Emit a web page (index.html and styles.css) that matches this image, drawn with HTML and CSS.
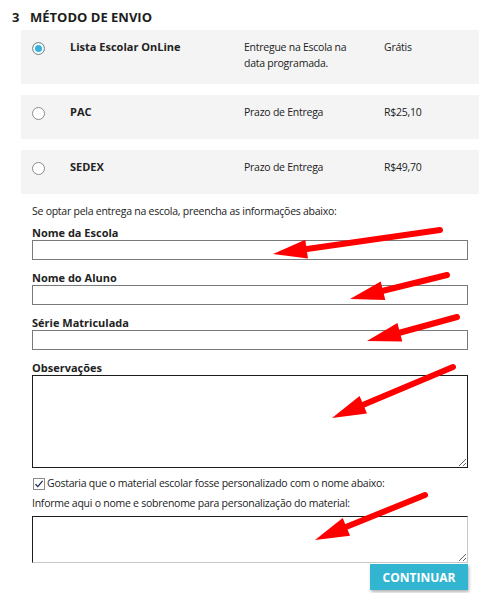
FILE: index.html
```html
<!DOCTYPE html>
<html lang="pt-BR">
<head>
<meta charset="utf-8">
<title>Método de Envio</title>
<link rel="stylesheet" href="styles.css">
</head>
<body>
<div class="page">
  <h2 class="step-title"><span class="step-num">3</span>MÉTODO DE ENVIO</h2>

  <div class="methods">
    <div class="method method-first">
      <span class="radio radio-on"></span>
      <span class="m-name">Lista Escolar OnLine</span>
      <span class="m-desc">Entregue na Escola na data programada.</span>
      <span class="m-price">Grátis</span>
    </div>
    <div class="method">
      <span class="radio"></span>
      <span class="m-name">PAC</span>
      <span class="m-desc">Prazo de Entrega</span>
      <span class="m-price">R$25,10</span>
    </div>
    <div class="method">
      <span class="radio"></span>
      <span class="m-name">SEDEX</span>
      <span class="m-desc">Prazo de Entrega</span>
      <span class="m-price">R$49,70</span>
    </div>
  </div>

  <form class="school-form">
    <p class="intro">Se optar pela entrega na escola, preencha as informações abaixo:</p>
    <div class="field">
      <label class="f-label">Nome da Escola</label>
      <input class="f-input" type="text">
    </div>
    <div class="field">
      <label class="f-label">Nome do Aluno</label>
      <input class="f-input" type="text">
    </div>
    <div class="field">
      <label class="f-label">Série Matriculada</label>
      <input class="f-input" type="text">
    </div>
    <div class="field">
      <label class="f-label">Observações</label>
      <textarea class="f-area"></textarea>
    </div>
    <div class="check-row">
      <span class="checkbox"><svg width="12" height="12" viewBox="0 0 12 12"><rect x="0.5" y="0.5" width="11" height="11" fill="#fff" stroke="#8a8a8a"/><path d="M2.5 6.2 L4.8 8.6 L9.6 2.8" fill="none" stroke="#1d2a4a" stroke-width="1.3"/></svg></span>
      <span class="check-text">Gostaria que o material escolar fosse personalizado com o nome abaixo:</span>
    </div>
    <p class="info">Informe aqui o nome e sobrenome para personalização do material:</p>
    <textarea class="f-area2"></textarea>
    <div class="actions">
      <button type="button" class="btn">CONTINUAR</button>
    </div>
  </form>

  <svg class="annot" width="492" height="593" viewBox="0 0 492 593">
    <g stroke="#ff0000" stroke-width="6" stroke-linecap="round" fill="none">
      <line x1="440" y1="230" x2="300" y2="250"/>
      <line x1="447" y1="275" x2="378" y2="292"/>
      <line x1="457" y1="317" x2="395" y2="334"/>
      <line x1="453" y1="367" x2="358" y2="407"/>
      <line x1="425" y1="495" x2="341" y2="529"/>
    </g>
    <g fill="#ff0000">
      <polygon points="273,254 305.3,239.8 308,258.6"/>
      <polygon points="350,299 380.7,281.6 385.3,300"/>
      <polygon points="367,341 397.4,323 402.3,341.4"/>
      <polygon points="332,418 359.6,396 367,413.6"/>
      <polygon points="315,540 342.7,518.1 350.1,535.7"/>
    </g>
  </svg>
</div>
</body>
</html>
```

FILE: styles.css
```css
* { box-sizing: border-box; }

html, body {
  margin: 0;
  padding: 0;
  background: #fff;
}

body {
  font-family: "Open Sans", "DejaVu Sans", sans-serif;
  font-size: 10.5px;
  letter-spacing: -0.25px;
  color: #222;
}

.page {
  position: relative;
  width: 492px;
  height: 593px;
  padding-top: 9px;
  overflow: hidden;
}

.step-title {
  margin: 0 0 5px 12px;
  font-size: 13px;
  line-height: 16px;
  font-weight: 700;
  letter-spacing: 0;
  color: #1e1e1e;
  display: flex;
}

.step-num {
  width: 18px;
}

.methods {
  margin-left: 21px;
  width: 458px;
  display: flex;
  flex-direction: column;
  gap: 11px;
}

.method {
  background: #f4f4f4;
  min-height: 44px;
  padding: 9px 0 13px 11px;
  display: grid;
  grid-template-columns: 38px 174px 140px 1fr;
  align-items: start;
  line-height: 16px;
}

.radio {
  width: 13px;
  height: 13px;
  margin-top: 3px;
  border: 1px solid #8c8c8c;
  border-radius: 50%;
  background: #fff;
}

.radio-on {
  background: #35b3db;
  box-shadow: inset 0 0 0 2px #fff;
}

.m-name {
  font-size: 11px;
  font-weight: 700;
  letter-spacing: 0;
  color: #222;
}

.m-desc {
  max-width: 108px;
  color: #222;
}

.m-price {
  color: #222;
}

.school-form {
  margin: 0;
  padding: 0 24px 0 32px;
  width: 492px;
}

.intro {
  margin: 10px 0 7px;
  line-height: 15px;
}

.field + .field {
  margin-top: 11px;
}

.f-label {
  display: block;
  font-size: 11px;
  font-weight: 700;
  letter-spacing: 0;
  line-height: 14px;
  color: #222;
}

.f-input {
  display: block;
  width: 436px;
  height: 20px;
  margin: 0;
  border: 1px solid #7a7a7a;
  background: #fff;
  font: inherit;
  padding: 0 4px;
}

.f-area {
  display: block;
  width: 436px;
  height: 93px;
  margin: 0;
  border: 1px solid #1c1c1c;
  background: #fff;
  font: inherit;
}

.check-row {
  margin-top: 8px;
  display: flex;
  align-items: center;
  gap: 2px;
  line-height: 15px;
  padding-left: 1px;
}

.checkbox {
  display: flex;
  width: 12px;
  height: 12px;
}

.info {
  margin: 5px 0 5px;
  line-height: 15px;
}

.f-area2 {
  display: block;
  width: 436px;
  height: 47px;
  margin: 0;
  border-style: solid;
  border-width: 1px;
  border-color: #1c1c1c #c8c8c8 #c8c8c8 #1c1c1c;
  background: #fff;
  font: inherit;
}

.actions {
  width: 436px;
  display: flex;
  justify-content: flex-end;
  margin-top: 1px;
}

.btn {
  width: 98px;
  height: 26px;
  border: 0;
  background: #31b5d1;
  color: #fff;
  font-family: "Open Sans", "DejaVu Sans", sans-serif;
  font-weight: 700;
  font-size: 12px;
  letter-spacing: 0;
  padding: 0;
  box-shadow: 1px 2px 3px rgba(0, 0, 0, 0.3);
}

.annot {
  position: absolute;
  left: 0;
  top: 0;
  pointer-events: none;
}
```
